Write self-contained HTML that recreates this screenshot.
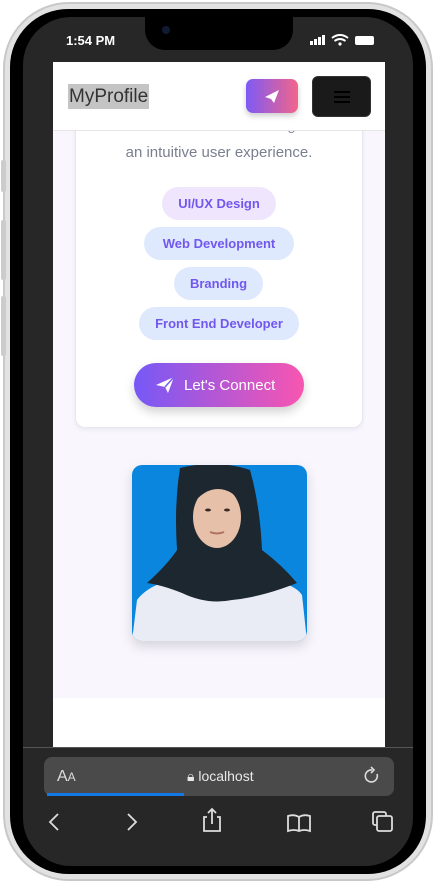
<!DOCTYPE html>
<html><head><meta charset="utf-8"><style>
*{margin:0;padding:0;box-sizing:border-box}
body{width:436px;height:883px;background:#fff;position:relative;overflow:hidden;font-family:"Liberation Sans",sans-serif}
.frame{position:absolute;left:3px;top:2px;width:430px;height:879px;border-radius:66px;background:#e2e2e2;border:2px solid #c8c8c8}
.bez{position:absolute;left:10px;top:9px;width:416px;height:865px;border-radius:58px;background:#000}
.scr{position:absolute;left:23px;top:17px;width:390px;height:849px;border-radius:48px;background:#272727;overflow:hidden}
.notch{position:absolute;left:145px;top:17px;width:148px;height:33px;background:#000;border-radius:0 0 20px 20px}
.btn{position:absolute;left:1px;width:5px;background:#ccc;border-radius:2px}
.web{position:absolute;left:53px;top:62px;width:332px;height:685px;background:#fff;overflow:hidden}
.hdr{position:absolute;left:0;top:0;width:332px;height:69px;background:#fff;border-bottom:1px solid #e6e6e6;z-index:2}
.lav{position:absolute;left:0;top:69px;width:332px;height:567px;background:#f9f6fe}
.card{position:absolute;left:22px;top:-40px;width:288px;height:337px;background:#fff;border-radius:10px;border:1px solid #e8e6ee;box-shadow:0 2px 4px rgba(0,0,0,.06)}
.chip{position:absolute;height:33px;border-radius:17px;font-weight:bold;font-size:13px;color:#7157ee;display:flex;align-items:center;justify-content:center;background:#dfe9fd}
</style></head><body>
<div class="frame"></div>
<div class="btn" style="top:160px;height:32px"></div>
<div class="btn" style="top:220px;height:60px"></div>
<div class="btn" style="top:296px;height:60px"></div>
<div class="bez"></div>
<div class="scr"></div>
<div class="notch"></div>
<div style="position:absolute;left:162px;top:26px;width:8px;height:8px;border-radius:50%;background:#111a33"></div>
<div style="position:absolute;left:66px;top:33px;color:#fff;font-weight:bold;font-size:13px">1:54 PM</div>
<svg style="position:absolute;left:310px;top:34px" width="66" height="12">
<rect x="0" y="7" width="3" height="4" fill="#fff"/><rect x="4" y="5" width="3" height="6" fill="#fff"/><rect x="8" y="3" width="3" height="8" fill="#fff"/><rect x="12" y="1" width="3" height="10" fill="#fff"/>
<path d="M22 4 Q30 -2 38 4 M24.5 7 Q30 3 35.5 7" stroke="#fff" stroke-width="2" fill="none"/><circle cx="30" cy="10" r="1.6" fill="#fff"/>
<rect x="45" y="2" width="19" height="9" rx="2" fill="#fff"/></svg>
<div class="web">
 <div class="hdr">
  <div style="position:absolute;left:15px;top:22px;background:#c4c4c4;color:#333;font-size:19px;padding:0 1px;line-height:25px">MyProfile</div>
  <div style="position:absolute;left:193px;top:17px;width:52px;height:34px;border-radius:7px;background:linear-gradient(90deg,#7e5af5,#f2658a);box-shadow:0 3px 6px rgba(0,0,0,.2)">
   <svg width="52" height="34"><path d="M19 18 L33 11 L28 24 L25 20 Z" fill="#fff"/></svg></div>
  <div style="position:absolute;left:259px;top:14px;width:59px;height:41px;border-radius:6px;background:#1a1a1a;border:1px solid #333">
   <div style="position:absolute;left:21px;top:14px;width:16px;height:2px;background:#000;box-shadow:0 5px 0 #000,0 10px 0 #000"></div></div>
 </div>
 <div class="lav">
  <div class="card">
   <div style="position:absolute;left:0;width:286px;top:25px;text-align:center;color:#8a8fa0;font-size:15px">create a seamless design</div>
   <div style="position:absolute;left:0;width:286px;top:52px;text-align:center;color:#7a7f90;font-size:15px">an intuitive user experience.</div>
   <div class="chip" style="left:86px;top:95px;width:114px;background:#efe6fd">UI/UX Design</div>
   <div class="chip" style="left:68px;top:135px;width:150px">Web Development</div>
   <div class="chip" style="left:98px;top:175px;width:89px">Branding</div>
   <div class="chip" style="left:63px;top:215px;width:160px">Front End Developer</div>
   <div style="position:absolute;left:58px;top:271px;width:170px;height:44px;border-radius:22px;background:linear-gradient(90deg,#7658f7,#f856b0);box-shadow:0 5px 10px rgba(0,0,0,.18);color:#fff;font-size:15px;display:flex;align-items:center;padding-left:50px">Let's Connect
    <svg style="position:absolute;left:21px;top:13px" width="20" height="18"><path d="M1 9 L19 1 L13 17 L10 11 Z" fill="#fff"/><path d="M10 11 L19 1" stroke="#7a5cf3" stroke-width="1.5"/></svg></div>
  </div>
  <svg style="position:absolute;left:79px;top:334px;filter:drop-shadow(0 5px 6px rgba(0,0,0,.15))" width="175" height="176">
   <defs><clipPath id="c"><rect width="175" height="176" rx="10"/></clipPath></defs>
   <g clip-path="url(#c)">
    <rect width="175" height="176" fill="#0b86de"/>
    <path d="M0 176 L5 135 Q20 115 60 112 L115 112 Q160 115 170 130 L175 176 Z" fill="#e9ecf4"/>
    <path d="M48 3 Q85 -6 118 5 Q128 40 130 85 Q150 100 165 118 Q130 132 100 135 Q75 140 50 128 Q30 120 15 118 Q35 100 45 85 Q42 40 48 3 Z" fill="#1d2730"/>
    <ellipse cx="85" cy="52" rx="24" ry="31" fill="#e6c0a8"/>
    <path d="M60 40 Q62 16 86 16 Q110 16 112 40 Q100 24 86 24 Q72 24 60 40 Z" fill="#1d2730"/>
    <ellipse cx="76" cy="45" rx="3" ry="1.5" fill="#3a2a25"/><ellipse cx="95" cy="45" rx="3" ry="1.5" fill="#3a2a25"/>
    <path d="M78 67 Q85 70 92 67" stroke="#b07060" stroke-width="2" fill="none"/>
   </g></svg>
 </div>
</div>
<div style="position:absolute;left:23px;top:747px;width:390px;height:1px;background:#555"></div>
<div style="position:absolute;left:44px;top:757px;width:350px;height:39px;border-radius:8px;background:#4a4a4a"></div>
<div style="position:absolute;left:47px;top:793px;width:137px;height:3px;background:#1479e6"></div>
<div style="position:absolute;left:57px;top:768px;color:#ddd;font-size:16px">A<span style="font-size:12px">A</span></div>
<div style="position:absolute;left:187px;top:768px;color:#e8e8e8;font-size:14px">&#x1F512;&#xFE0E; localhost</div>
<svg style="position:absolute;left:362px;top:766px" width="20" height="20"><path d="M15 8 A6 6 0 1 1 10 4" stroke="#ddd" stroke-width="1.6" fill="none"/><path d="M9 1 L12 4 L9 7" stroke="#ddd" stroke-width="1.6" fill="none"/></svg>
<svg style="position:absolute;left:0;top:806px" width="436" height="40" stroke="#ddd" stroke-width="1.8" fill="none">
<path d="M58 8 L50 16 L58 24"/><path d="M128 8 L136 16 L128 24"/>
<path d="M207 11 L204 11 L204 25 L220 25 L220 11 L217 11 M212 18 L212 3 M208 7 L212 3 L216 7"/>
<path d="M288 10 Q294 8 299 11 Q304 8 310 10 L310 25 Q304 23 299 25 Q294 23 288 25 Z M299 11 L299 25"/>
<rect x="373" y="6" width="13" height="13" rx="2"/><rect x="377" y="10" width="15" height="15" rx="2" fill="#272727"/>
</svg>
</body></html>
